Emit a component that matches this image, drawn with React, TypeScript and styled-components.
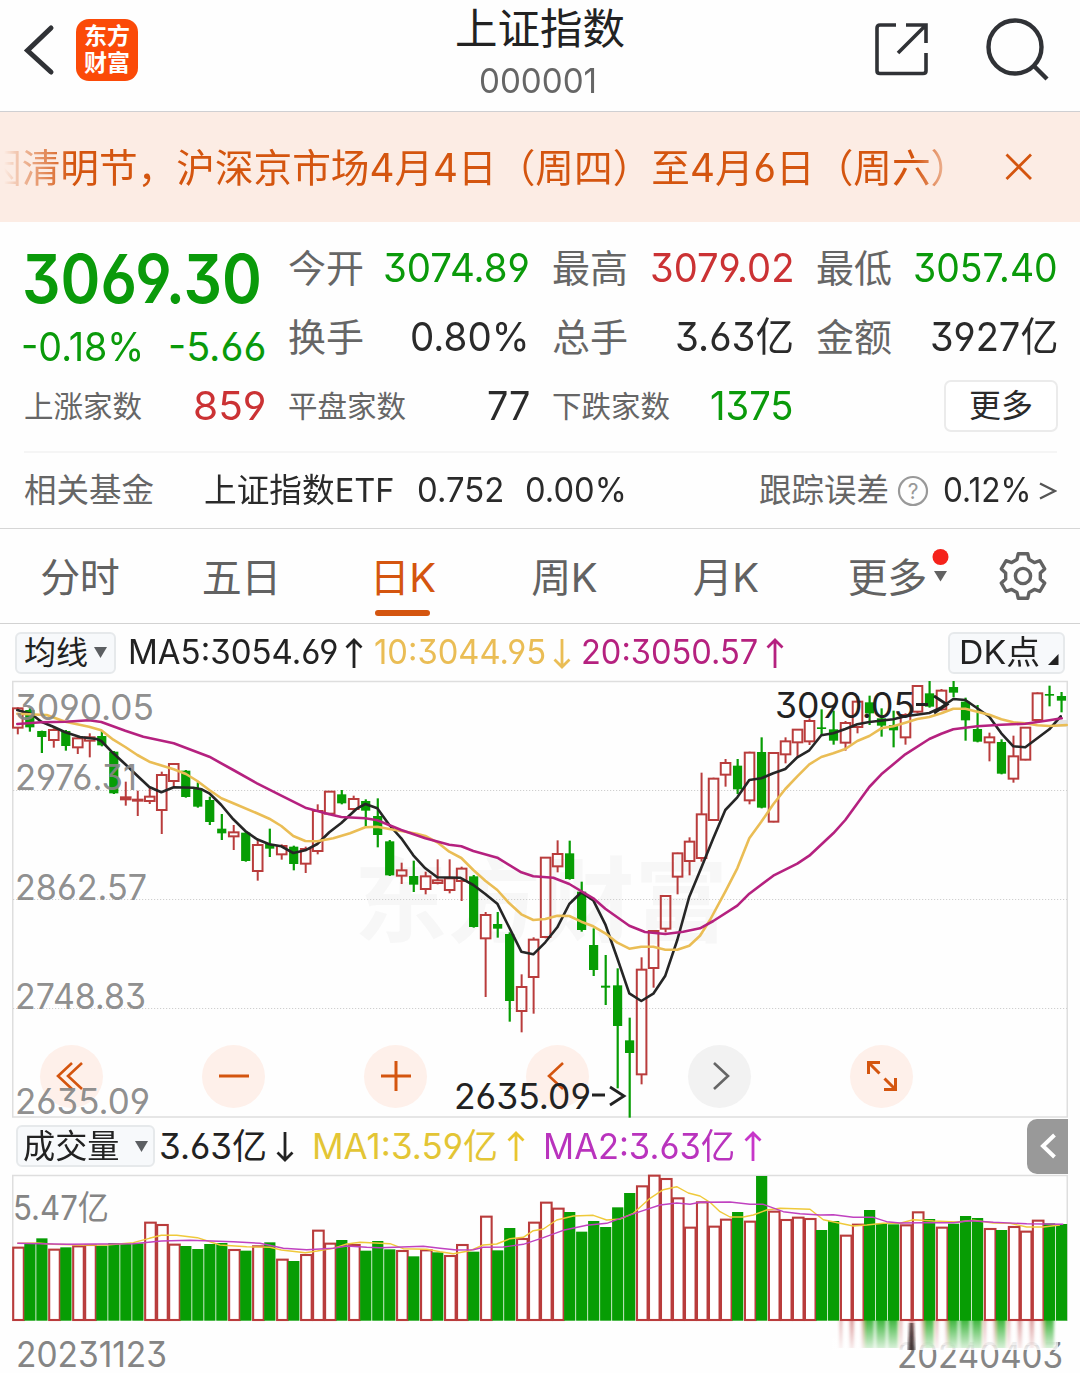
import React, { useLayoutEffect, useRef, useState } from "react";
import styled, { createGlobalStyle } from "styled-components";

const GREEN = "#0a9a0a";
const BAR_GREEN = "#079d04";
const RED = "#cb3234";
const BAR_RED = "#b93c3c";
const ORANGE = "#d4550f";
const FONT = `Inter, "Noto Sans CJK SC", sans-serif`;
const FEATURES = `"cv03" 1, "cv04" 1, "cv09" 1`;

const Global = createGlobalStyle`
  html, body { margin: 0; padding: 0; background: #fefefe; }
  body {
    font-family: ${FONT};
    font-feature-settings: ${FEATURES};
    color: #2a2a2a;
  }
  * { box-sizing: border-box; }
  button { font: inherit; font-feature-settings: inherit; color: inherit; padding: 0; margin: 0; }
`;

/* ---------- text that condenses to a given width ---------- */

const FitBox = styled.span<{ $w: number; $size: number; $weight?: number; $color?: string; $ml?: number }>`
  display: block;
  flex: none;
  width: ${(p) => p.$w}px;
  margin-left: ${(p) => p.$ml ?? 0}px;
  font-size: ${(p) => p.$size}px;
  font-weight: ${(p) => p.$weight ?? 400};
  line-height: 1.2;
  color: ${(p) => p.$color ?? "inherit"};
  white-space: nowrap;
`;

const FitInner = styled.span`
  display: inline-block;
  transform-origin: 0 50%;
`;

type FitProps = { text: string; w: number; size: number; weight?: number; color?: string; ml?: number };

function Fit({ text, w, size, weight, color, ml }: FitProps) {
  const ref = useRef<HTMLSpanElement>(null);
  const [k, setK] = useState(1);
  useLayoutEffect(() => {
    if (ref.current) setK(w / ref.current.offsetWidth);
  }, [text, w, size]);
  return (
    <FitBox $w={w} $size={size} $weight={weight} $color={color} $ml={ml}>
      <FitInner ref={ref} style={{ transform: `scaleX(${k})` }}>
        {text}
      </FitInner>
    </FitBox>
  );
}

/* ---------- page ---------- */

const Page = styled.main`
  width: 1080px;
  height: 1373px;
  overflow: hidden;
  background: #fefefe;
`;

const Header = styled.header`
  display: grid;
  grid-template-columns: 1fr auto 1fr;
  height: 112px;
  border-bottom: 1px solid #cfcfd2;
`;

const HeaderLeft = styled.div`
  display: flex;
  align-items: center;
  height: 100px;
  padding-left: 22px;
  gap: 20px;
`;

const HeaderRight = styled.div`
  display: flex;
  align-items: center;
  justify-content: flex-end;
  height: 98px;
  padding-right: 30px;
  gap: 58px;
`;

const Titles = styled.div`
  display: flex;
  flex-direction: column;
  align-items: center;
`;

const TitleLine = styled.div<{ $h: number }>`
  display: flex;
  align-items: center;
  height: ${(p) => p.$h}px;
`;

const Logo = styled.div`
  display: flex;
  flex-direction: column;
  align-items: center;
  justify-content: center;
  width: 62px;
  height: 62px;
  border-radius: 13px;
  background: #fb4a08;
  color: #fff;
  font-size: 23px;
  font-weight: 700;
  line-height: 27px;
`;

const Banner = styled.section`
  display: flex;
  align-items: center;
  height: 110px;
  background: #fcece4;
`;

const Marquee = styled.div`
  display: flex;
  width: 975px;
  padding-top: 2px;
  overflow: hidden;
  mask-image: linear-gradient(to right, transparent 4px, rgba(0, 0, 0, 0.3) 20px, #000 72px, #000 915px, transparent 962px);
`;

const CloseIcon = styled.svg`
  margin-left: 29px;
`;

const Quote = styled.section`
  display: grid;
  grid-template-columns: repeat(4, 240px);
  column-gap: 24px;
  padding: 12px 24px 10px;
`;

const QuoteColumn = styled.div`
  display: flex;
  flex-direction: column;
`;

const Cell = styled.div<{ $h?: number }>`
  display: flex;
  align-items: center;
  justify-content: space-between;
  height: ${(p) => p.$h ?? 69}px;
  margin-right: -2px;
`;

const Label = styled.span<{ $size: number }>`
  font-size: ${(p) => p.$size}px;
  line-height: 1.2;
  color: #666;
  white-space: nowrap;
`;

const MoreButton = styled.button`
  width: 114px;
  height: 52px;
  margin: -2px 0 0 auto;
  border: 2px solid #ebebeb;
  border-radius: 7px;
  background: #fff;
  font-size: 32px;
  line-height: 48px;
`;

const FundRow = styled.section`
  display: flex;
  align-items: center;
  height: 77px;
  margin: 0 23px 0 24px;
  border-top: 2px solid #f5f5f5;
`;

const Spacer = styled.span`
  flex: 1;
`;

const HelpIcon = styled.svg`
  margin: 0 14px 0 8px;
`;

const Tabs = styled.nav`
  display: flex;
  height: 96px;
  border-top: 1px solid #d6d6d6;
  border-bottom: 1px solid #d2d2d2;
`;

const Tab = styled.div<{ $active?: boolean }>`
  position: relative;
  display: flex;
  justify-content: center;
  align-items: center;
  width: 161.5px;
  height: 94px;
  padding: 3px 2px 0 0;
  font-size: 40px;
  line-height: 1.2;
  letter-spacing: -0.5px;
  color: ${(p) => (p.$active ? ORANGE : "#626262")};
  &::after {
    content: "";
    display: ${(p) => (p.$active ? "block" : "none")};
    position: absolute;
    left: 52px;
    bottom: 7px;
    width: 55px;
    height: 6px;
    border-radius: 3px;
    background: ${ORANGE};
  }
`;

const MoreMark = styled.svg`
  position: absolute;
  left: 123.5px;
  top: 17px;
`;

const GearBox = styled.div`
  display: flex;
  align-items: center;
  justify-content: center;
  width: 108px;
`;

const LegendRow = styled.div<{ $h: number; $left: number; $right: number }>`
  display: flex;
  align-items: center;
  height: ${(p) => p.$h}px;
  padding: 0 ${(p) => p.$right}px 0 ${(p) => p.$left}px;
`;

const Chip = styled.button<{ $w: number; $pad: number }>`
  display: flex;
  align-items: center;
  justify-content: space-between;
  flex: none;
  width: ${(p) => p.$w}px;
  height: 42px;
  padding: 0 ${(p) => p.$pad}px;
  border: 2px solid #e6e9eb;
  border-radius: 6px;
  background: #f7f9fb;
  color: #222;
  font-size: 32px;
  line-height: 38px;
  white-space: nowrap;
`;

const ArrowSvg = styled.svg<{ $ml: number }>`
  flex: none;
  margin-left: ${(p) => p.$ml}px;
`;

const SideToggle = styled.button`
  display: flex;
  align-items: center;
  justify-content: center;
  width: 41px;
  height: 55px;
  border: 0;
  border-radius: 10px 0 0 10px;
  background: #999;
`;

const ChartArea = styled.section`
  position: relative;
  height: 436px;
`;

const ChartSvg = styled.svg`
  display: block;
  overflow: visible;
`;

const Controls = styled.div`
  position: absolute;
  left: 40px;
  top: 363.5px;
  display: flex;
  gap: 99px;
`;

const RoundButton = styled.button<{ $muted?: boolean }>`
  display: flex;
  align-items: center;
  justify-content: center;
  width: 63px;
  height: 63px;
  border: 0;
  border-radius: 50%;
  background: ${(p) => (p.$muted ? "#f2f2f2" : "#fef0ea")};
  color: ${(p) => (p.$muted ? "#666" : ORANGE)};
`;

const Overlay = styled.svg`
  position: absolute;
  left: 0;
  top: 0;
  pointer-events: none;
`;

/* ---------- icons ---------- */

function Caret() {
  return (
    <svg width="13" height="11" viewBox="0 0 13 11">
      <path d="M0 0H13L6.5 11Z" fill="#5c5f62" />
    </svg>
  );
}

function TrendArrow({ up, color, ml }: { up?: boolean; color: string; ml: number }) {
  return (
    <ArrowSvg $ml={ml} width="18" height="32" viewBox="0 0 18 32" fill="none" stroke={color} strokeWidth="2.8">
      {up ? <path d="M9 31V3M1.5 10.5L9 3L16.5 10.5" /> : <path d="M9 2V30M1.5 22.5L9 30L16.5 22.5" />}
    </ArrowSvg>
  );
}

function Gear() {
  const pts: string[] = [];
  for (let k = 0; k < 6; k++) {
    const shape: [number, number][] = [
      [-20, 17.6],
      [-12, 22.8],
      [12, 22.8],
      [20, 17.6],
    ];
    shape.forEach(([a, r]) => {
      const t = ((k * 60 + a - 90) * Math.PI) / 180;
      pts.push(`${(25 + r * Math.cos(t)).toFixed(2)},${(25 + r * Math.sin(t)).toFixed(2)}`);
    });
  }
  return (
    <svg width="50" height="50" viewBox="0 0 50 50" fill="none" stroke="#626262" strokeWidth="3.4" strokeLinejoin="round">
      <polygon points={pts.join(" ")} />
      <circle cx="25" cy="25" r="7.6" />
    </svg>
  );
}

/* ---------- chart data, in thirds of a pixel ---------- */

type Candle = [0 | 1, number, number, number, number];

// direction (1 = up), high, body top, body bottom, low
const candles: Candle[] = [
  [1, 97, 100, 158, 178], [0, 100, 105, 157, 170], [0, 167, 168, 186, 234], [1, 160, 165, 195, 218],
  [0, 165, 168, 213, 227], [1, 185, 190, 217, 237], [1, 175, 187, 197, 247], [0, 165, 183, 211, 214],
  [0, 228, 230, 355, 357], [1, 320, 367, 373, 392], [1, 347, 374, 376, 423], [1, 337, 365, 378, 387],
  [1, 290, 300, 405, 477], [1, 265, 267, 318, 333], [0, 285, 287, 366, 368], [0, 322, 340, 395, 398],
  [0, 365, 375, 441, 450], [0, 417, 461, 475, 495], [1, 450, 472, 484, 525], [0, 470, 473, 558, 560],
  [1, 495, 510, 588, 617], [0, 461, 507, 521, 546], [1, 508, 513, 538, 554], [0, 512, 515, 567, 586],
  [1, 515, 522, 566, 594], [1, 388, 408, 528, 538], [1, 348, 350, 416, 420], [0, 345, 358, 385, 388],
  [1, 362, 372, 402, 408], [0, 373, 378, 407, 455], [0, 370, 423, 480, 517], [0, 495, 499, 601, 603],
  [1, 563, 586, 602, 627], [0, 557, 603, 629, 651], [1, 590, 604, 642, 658], [1, 553, 616, 624, 628],
  [1, 553, 610, 645, 655], [1, 575, 581, 618, 678], [0, 600, 604, 756, 758], [1, 711, 720, 790, 966],
  [0, 711, 747, 761, 788], [0, 772, 777, 978, 1040], [1, 898, 936, 1008, 1072], [1, 787, 794, 906, 1016],
  [1, 546, 548, 786, 790], [1, 496, 537, 574, 592], [0, 497, 535, 612, 614], [0, 620, 650, 765, 770],
  [0, 760, 810, 885, 903], [0, 840, 932, 938, 990], [0, 880, 931, 1053, 1240], [0, 1028, 1096, 1134, 1328],
  [1, 847, 884, 1198, 1228], [1, 768, 768, 879, 938], [1, 662, 663, 761, 772], [1, 533, 535, 605, 658],
  [1, 487, 500, 558, 601], [1, 293, 418, 549, 560], [1, 308, 311, 435, 437], [1, 252, 264, 299, 335],
  [0, 252, 272, 343, 357], [1, 230, 233, 376, 388], [0, 187, 231, 398, 400], [1, 232, 234, 440, 442],
  [1, 187, 199, 238, 265], [1, 162, 164, 202, 247], [1, 130, 138, 199, 210], [0, 103, 157, 162, 180],
  [0, 107, 163, 197, 209], [1, 138, 144, 203, 227], [1, 64, 80, 156, 175], [0, 62, 82, 115, 150],
  [0, 100, 130, 152, 185], [0, 107, 150, 166, 217], [1, 115, 120, 187, 209], [1, 30, 33, 110, 115],
  [0, 18, 55, 95, 98], [1, 42, 47, 103, 107], [0, 18, 36, 53, 67], [0, 68, 80, 136, 197],
  [0, 90, 162, 200, 202], [1, 173, 187, 202, 259], [0, 193, 201, 296, 298], [1, 182, 244, 311, 323],
  [1, 157, 158, 254, 256], [1, 52, 55, 135, 140], [0, 32, 57, 62, 94], [0, 51, 63, 77, 112],
];

const ma5 = "52,105 95,118 124,140 160,155 196,172 240,186 290,192 304,198 340,235 376,268 412,302 448,336 484,352 521,337 580,338 605,343 628,355 664,390 700,433 736,468 771,493 808,508 844,514 880,534 916,526 952,507 988,472 1024,444 1070,401 1096,387 1132,400 1168,450 1204,490 1240,541 1276,580 1312,607 1380,608 1420,630 1456,657 1492,686 1528,758 1564,830 1600,838 1636,802 1672,757 1708,687 1744,652 1780,676 1816,748 1852,850 1888,955 1924,978 1960,956 1996,902 2032,795 2068,665 2104,578 2140,490 2176,405 2212,367 2248,315 2284,310 2320,295 2356,282 2392,247 2428,226 2464,181 2500,175 2536,162 2572,148 2608,141 2680,133 2716,124 2788,114 2824,97 2860,72 2896,75 2932,100 2968,125 3004,175 3040,214 3076,217 3112,190 3148,163 3182,124";
const ma10 = "52,116 140,120 196,140 267,155 304,166 340,194 376,216 412,240 448,260 521,283 558,297 592,318 628,345 664,370 700,385 771,415 808,431 844,453 880,483 916,498 952,499 1000,490 1050,475 1096,457 1132,455 1168,462 1204,468 1250,476 1276,483 1312,502 1348,530 1384,549 1420,585 1456,617 1492,645 1528,685 1564,718 1600,735 1636,732 1672,722 1708,723 1744,740 1780,754 1816,775 1852,803 1888,821 1924,815 1960,815 1996,824 2032,824 2068,812 2100,782 2130,735 2176,650 2212,580 2248,490 2284,440 2320,388 2356,342 2392,304 2428,268 2464,246 2500,235 2536,222 2572,198 2608,183 2644,160 2680,154 2716,143 2752,132 2788,126 2824,115 2860,101 2896,101 2932,110 2968,119 3004,133 3040,142 3076,145 3112,151 3148,153 3200,150";
const ma20 = "52,147 124,142 196,140 267,136 304,141 376,167 430,185 521,205 628,245 700,285 771,325 844,362 916,398 988,418 1024,426 1096,430 1132,436 1204,465 1276,490 1348,509 1384,514 1420,528 1492,548 1564,592 1600,604 1660,608 1708,627 1780,670 1816,701 1888,752 1935,771 1996,777 2050,770 2100,760 2140,738 2212,692 2248,656 2320,602 2392,566 2428,542 2500,475 2536,435 2608,336 2644,298 2716,238 2788,192 2824,176 2860,163 2932,154 3004,149 3076,146 3148,136 3185,130";

const volumes = [
  398, 387, 370, 404, 397, 394, 390, 392, 384, 387, 385, 323, 330, 389, 393, 402, 387, 384, 405, 407, 394, 382, 434, 438,
  420, 347, 386, 375, 390, 407, 378, 403, 408, 424, 406, 412, 423, 390, 410, 305, 406, 339, 372, 323, 263, 281, 291, 350,
  318, 336, 277, 234, 214, 182, 192, 250, 338, 262, 335, 314, 291, 320, 183, 290, 315, 308, 312, 345, 318, 362, 329, 285,
  326, 328, 331, 292, 312, 338, 326, 303, 309, 342, 345, 336, 350, 317, 325, 327,
];
const volumeUp = "1001011000011100001010101110100010101101001111000000111111110101111001100011010001011100"
  .split("")
  .map((c) => c === "1");

const vma1 = "52,385 110,384 160,388 250,390 320,390 400,383 448,370 484,361 530,361 592,368 660,390 740,395 810,397 844,405 916,413 952,408 1000,400 1040,387 1080,382 1170,386 1210,401 1280,403 1320,410 1360,416 1410,407 1450,390 1490,387 1530,371 1570,367 1600,347 1630,342 1670,315 1720,303 1780,301 1820,315 1860,312 1900,295 1950,250 1990,224 2030,215 2065,234 2100,243 2130,262 2160,290 2190,306 2230,306 2260,300 2300,285 2340,280 2430,283 2470,314 2520,325 2560,333 2600,330 2650,325 2700,325 2740,314 2800,318 2870,321 2920,316 2980,324 3030,325 3080,336 3130,336 3180,330";
const vma2 = "52,385 200,388 400,386 484,378 570,376 700,380 780,385 850,400 920,404 1000,400 1040,393 1100,397 1140,398 1270,394 1320,400 1370,405 1420,404 1450,397 1510,396 1570,388 1630,368 1690,346 1760,331 1820,325 1870,307 1920,290 1980,270 2030,264 2070,268 2100,262 2190,261 2250,268 2290,268 2350,290 2400,296 2460,300 2500,299 2560,307 2620,307 2660,320 2700,324 2770,323 2860,323 2910,317 2980,322 3080,326 3190,328";

const toPoints = (s: string, dy: number) =>
  s
    .split(" ")
    .map((p) => {
      const [x, y] = p.split(",").map(Number);
      return `${(x / 3).toFixed(1)},${(y / 3 + dy).toFixed(1)}`;
    })
    .join(" ");

type AxisTextProps = { x: number; y: number; w: number; size: number; fill: string; children: string };

function AxisText({ x, y, w, size, fill, children }: AxisTextProps) {
  return (
    <text x={x} y={y + size * 0.364} fontSize={size} fill={fill} textLength={w} lengthAdjust="spacingAndGlyphs">
      {children}
    </text>
  );
}

function PriceChart() {
  return (
    <ChartSvg width="1080" height="436" viewBox="0 681 1080 436">
      <text x="354" y="935" fontSize="93.5" fontWeight="700" fill="#f7f7f7">
        东方财富
      </text>
      <rect x="12.75" y="681.5" width="1054.5" height="435.5" fill="none" stroke="#dedede" strokeWidth="1.5" />
      {[790.5, 899.5, 1008.5].map((y) => (
        <line key={y} x1="13" x2="1067" y1={y} y2={y} stroke="#cfcfcf" strokeDasharray="1.2 1.8" />
      ))}
    </ChartSvg>
  );
}

function PriceSeries() {
  return (
    <Overlay width="1080" height="440" viewBox="0 681 1080 440">
      {candles.map(([up, hi, top, bottom, lo], i) => {
        const x = 17.8 + i * 11.996;
        const y = (v: number) => 675 + v / 3;
        return up ? (
          <g key={i} stroke={BAR_RED} strokeWidth="2" fill="none">
            <line x1={x} x2={x} y1={y(hi)} y2={y(top)} />
            <rect x={x - 4.8} y={y(top)} width="9.6" height={Math.max(1, y(bottom) - y(top))} />
            <line x1={x} x2={x} y1={y(bottom)} y2={y(lo)} />
          </g>
        ) : (
          <g key={i} fill={BAR_GREEN}>
            <rect x={x - 1} y={y(hi)} width="2.2" height={y(lo) - y(hi)} />
            <rect x={x - 4.6} y={y(top)} width="9.2" height={y(bottom) - y(top)} />
          </g>
        );
      })}
      <rect x="1055" y="720" width="12" height="7" fill="#ddd" opacity="0.8" />
      <g fill="none" strokeWidth="2.6" strokeLinejoin="round" strokeLinecap="round">
        <polyline points={toPoints(ma5, 675)} stroke="#262626" />
        <polyline points={toPoints(ma10, 675)} stroke="#eabd55" />
        <polyline points={toPoints(ma20, 675)} stroke="#b5217f" />
      </g>
      <g fillOpacity="0.93">
        <AxisText x={15} y={707.3} w={139} size={35} fill="#858585">3090.05</AxisText>
        <AxisText x={15} y={777.3} w={122} size={35} fill="#858585">2976.31</AxisText>
        <AxisText x={15} y={887.3} w={132} size={35} fill="#858585">2862.57</AxisText>
        <AxisText x={15} y={996.3} w={131} size={35} fill="#858585">2748.83</AxisText>
        <AxisText x={15} y={1101} w={135} size={35} fill="#858585">2635.09</AxisText>
      </g>
      <AxisText x={775} y={705} w={140} size={35} fill="#222">3090.05</AxisText>
      <path d="M916 704.5H928M934 696L947 704.5L934 713" fill="none" stroke="#222" strokeWidth="2.8" />
      <AxisText x={454} y={1096.5} w={137} size={35} fill="#222">2635.09</AxisText>
      <path d="M592 1095H605M610 1087L624 1096L610 1105" fill="none" stroke="#222" strokeWidth="2.8" />
    </Overlay>
  );
}

function VolumeChart() {
  const base = 1320.7;
  return (
    <ChartSvg width="1080" height="198" viewBox="0 1175 1080 198">
      <defs>
        <linearGradient id="fade" x1="0" y1="0" x2="0" y2="1">
          <stop offset="0" stopColor="#fff" stopOpacity="0" />
          <stop offset="1" stopColor="#fff" stopOpacity="0.85" />
        </linearGradient>
        <filter id="soft" x="-5%" y="-5%" width="110%" height="110%">
          <feGaussianBlur stdDeviation="1.6 0.4" />
        </filter>
      </defs>
      <path d="M12.75 1321V1175.5H1067.25V1321" fill="none" stroke="#dedede" strokeWidth="1.5" />
      <AxisText x={13} y={1208} w={96} size={34} fill="#858585">5.47亿</AxisText>
      {volumes.map((v, i) => {
        const x = 12.2 + i * 11.996;
        const y = 1115 + v / 3;
        return volumeUp[i] ? (
          <rect key={i} x={x + 1} y={y} width="10.6" height={base - y - 0.7} fill="#fff" stroke={BAR_RED} strokeWidth="2.1" />
        ) : (
          <rect key={i} x={x + 0.1} y={y} width="11.2" height={base - y} fill={BAR_GREEN} />
        );
      })}
      <g fill="none" strokeWidth="1.4" strokeLinejoin="round">
        <polyline points={toPoints(vma1, 1115)} stroke="#efc93a" />
        <polyline points={toPoints(vma2, 1115)} stroke="#c042c0" />
      </g>
      <AxisText x={16} y={1354} w={151} size={35} fill="#858585">20231123</AxisText>
      <AxisText x={897} y={1355} w={166} size={35} fill="#858585">20240403</AxisText>
      <rect x="836" y="1322" width="230" height="19" fill="#fefefe" />
      <rect x="836" y="1341" width="220" height="4" fill="#fefefe" opacity="0.6" />
      <g filter="url(#soft)">
        {volumes.map((_, i) => {
          const x = 12.2 + i * 11.996;
          if (i < 69 || i > 86) return null;
          return volumeUp[i] ? (
            <g key={i} fill={BAR_RED} opacity="0.6">
              <rect x={x} y="1320" width="1.8" height="28" />
              <rect x={x + 10} y="1320" width="1.8" height="28" />
            </g>
          ) : (
            <rect key={i} x={x} y="1320" width="10" height="28" fill={BAR_GREEN} opacity="0.75" />
          );
        })}
      </g>
      <rect x="832" y="1320" width="226" height="30" fill="url(#fade)" />
      <g filter="url(#soft)">
        <path d="M910 1323L908 1350H915L913 1323Z" fill="#241416" opacity="0.85" />
      </g>
    </ChartSvg>
  );
}

/* ---------- app ---------- */

export default function App() {
  return (
    <Page>
      <Global />
      <Header>
        <HeaderLeft>
          <svg width="34" height="54" viewBox="0 0 34 54" fill="none" stroke="#303236" strokeWidth="5" strokeLinecap="round">
            <path d="M29 5L5.5 27.5L29 49" strokeLinejoin="miter" />
          </svg>
          <Logo>
            <span>东方</span>
            <span>财富</span>
          </Logo>
        </HeaderLeft>
        <Titles>
          <TitleLine $h={56}>
            <Fit text="上证指数" w={170} size={42.5} color="#222" />
          </TitleLine>
          <TitleLine $h={50}>
            <Fit text="000001" w={118} size={34} color="#666" ml={-4} />
          </TitleLine>
        </Titles>
        <HeaderRight>
          <svg width="54" height="54" viewBox="0 0 54 54" fill="none" stroke="#303236" strokeWidth="3.6">
            <path d="M22 3H6Q3 3 3 6V49Q3 51.5 6 51.5H49Q52 51.5 52 49V31" />
            <path d="M32 3H52V21M52 3L24 31" />
          </svg>
          <svg width="64" height="64" viewBox="0 0 64 64" fill="none" stroke="#303236" strokeWidth="4.4">
            <circle cx="29" cy="30" r="26.5" />
            <path d="M48 49L61 62" />
          </svg>
        </HeaderRight>
      </Header>

      <Banner>
        <Marquee>
          <Fit text="因清明节，沪深京市场4月4日（周四）至4月6日（周六）" w={986} size={39} color={ORANGE} ml={-17} />
        </Marquee>
        <CloseIcon width="30" height="30" viewBox="0 0 30 30" fill="none" stroke={ORANGE} strokeWidth="2.8">
          <path d="M2.5 2.5L27 27M27 2.5L2.5 27" />
        </CloseIcon>
      </Banner>

      <Quote>
        <QuoteColumn>
          <Cell $h={90}>
            <Fit text="3069.30" w={240} size={67} weight={600} color={GREEN} ml={-2} />
          </Cell>
          <Cell $h={48}>
            <Fit text="-0.18%" w={123} size={39.5} color={GREEN} ml={-3} />
            <Fit text="-5.66" w={98} size={39.5} color={GREEN} />
          </Cell>
          <Cell>
            <Label $size={29.5}>上涨家数</Label>
            <Fit text="859" w={73} size={39.5} color={RED} />
          </Cell>
        </QuoteColumn>
        <QuoteColumn>
          <Cell>
            <Label $size={38}>今开</Label>
            <Fit text="3074.89" w={147} size={39.5} color={GREEN} />
          </Cell>
          <Cell>
            <Label $size={38}>换手</Label>
            <Fit text="0.80%" w={120} size={39.5} />
          </Cell>
          <Cell>
            <Label $size={29.5}>平盘家数</Label>
            <Fit text="77" w={43} size={39.5} />
          </Cell>
        </QuoteColumn>
        <QuoteColumn>
          <Cell>
            <Label $size={38}>最高</Label>
            <Fit text="3079.02" w={144} size={39.5} color={RED} />
          </Cell>
          <Cell>
            <Label $size={38}>总手</Label>
            <Fit text="3.63亿" w={119} size={39.5} />
          </Cell>
          <Cell>
            <Label $size={29.5}>下跌家数</Label>
            <Fit text="1375" w={84} size={39.5} color={GREEN} />
          </Cell>
        </QuoteColumn>
        <QuoteColumn>
          <Cell>
            <Label $size={38}>最低</Label>
            <Fit text="3057.40" w={145} size={39.5} color={GREEN} />
          </Cell>
          <Cell>
            <Label $size={38}>金额</Label>
            <Fit text="3927亿" w={128} size={39.5} />
          </Cell>
          <Cell>
            <MoreButton>更多</MoreButton>
          </Cell>
        </QuoteColumn>
      </Quote>

      <FundRow>
        <Label $size={32.5}>相关基金</Label>
        <Fit text="上证指数ETF" w={191} size={33} ml={50} />
        <Fit text="0.752" w={87} size={34} ml={22} />
        <Fit text="0.00%" w={102} size={34} ml={21} />
        <Spacer />
        <Label $size={32.5}>跟踪误差</Label>
        <HelpIcon width="32" height="32" viewBox="0 0 32 32">
          <circle cx="16" cy="16" r="14" fill="none" stroke="#999" strokeWidth="2.2" />
          <text x="16" y="23.5" fontSize="21" fill="#999" textAnchor="middle">
            ?
          </text>
        </HelpIcon>
        <Fit text="0.12%" w={88} size={34} />
        <svg width="26" height="20" viewBox="0 0 26 20" fill="none" stroke="#555" strokeWidth="2.4">
          <path d="M9 2.5L24 10L9 17.5" />
        </svg>
      </FundRow>

      <Tabs>
        <Tab>分时</Tab>
        <Tab>五日</Tab>
        <Tab $active>日K</Tab>
        <Tab>周K</Tab>
        <Tab>月K</Tab>
        <Tab>
          更多
          <MoreMark width="24" height="40" viewBox="0 0 24 40">
            <circle cx="9.5" cy="11" r="8" fill="#f5221b" />
            <path d="M3 25H16L9.5 35.5Z" fill="#626262" />
          </MoreMark>
        </Tab>
        <GearBox>
          <Gear />
        </GearBox>
      </Tabs>

      <LegendRow $h={57} $left={15} $right={15}>
        <Chip $w={101} $pad={7}>
          均线
          <Caret />
        </Chip>
        <Fit text="MA5:3054.69" w={210} size={33.5} color="#222" ml={12} />
        <TrendArrow up color="#222" ml={7} />
        <Fit text="10:3044.95" w={172} size={33.5} color="#eabd55" ml={11} />
        <TrendArrow color="#eabd55" ml={7} />
        <Fit text="20:3050.57" w={177} size={33.5} color="#b5217f" ml={10} />
        <TrendArrow up color="#b5217f" ml={8} />
        <Spacer />
        <Chip $w={117} $pad={4}>
          <Fit text="DK点" w={81} size={33} ml={4} />
          <svg width="11" height="26" viewBox="0 0 11 26">
            <path d="M10.5 14V25H0Z" fill="#222" />
          </svg>
        </Chip>
      </LegendRow>

      <ChartArea>
        <PriceChart />
        <Controls>
          <RoundButton>
            <svg width="32" height="32" viewBox="0 0 32 32" fill="none" stroke="currentColor" strokeWidth="2.6">
              <path d="M16 3L2 16L16 29M26 3L12 16L26 29" />
            </svg>
          </RoundButton>
          <RoundButton>
            <svg width="32" height="32" viewBox="0 0 32 32" fill="none" stroke="currentColor" strokeWidth="3">
              <path d="M1 16H31" />
            </svg>
          </RoundButton>
          <RoundButton>
            <svg width="32" height="32" viewBox="0 0 32 32" fill="none" stroke="currentColor" strokeWidth="3">
              <path d="M1 16H31M16 1V31" />
            </svg>
          </RoundButton>
          <RoundButton>
            <svg width="32" height="32" viewBox="0 0 32 32" fill="none" stroke="currentColor" strokeWidth="2.6">
              <path d="M21 3L7 16L21 29" />
            </svg>
          </RoundButton>
          <RoundButton $muted>
            <svg width="32" height="32" viewBox="0 0 32 32" fill="none" stroke="currentColor" strokeWidth="2.6">
              <path d="M10 3L24 16L10 29" />
            </svg>
          </RoundButton>
          <RoundButton>
            <svg width="32" height="32" viewBox="0 0 32 32" fill="none" stroke="currentColor" strokeWidth="3">
              <path d="M14 2.5H2.5V14M2.5 2.5L13.5 13.5M18 29.5H29.5V18M29.5 29.5L18.5 18.5" />
            </svg>
          </RoundButton>
        </Controls>
        <PriceSeries />
      </ChartArea>

      <LegendRow $h={58} $left={16} $right={12}>
        <Chip $w={139} $pad={5}>
          <Fit text="成交量" w={97} size={32.5} />
          <Caret />
        </Chip>
        <Fit text="3.63亿" w={108} size={35} color="#222" ml={4} />
        <TrendArrow color="#222" ml={9} />
        <Fit text="MA1:3.59亿" w={186} size={35} color="#e3c535" ml={18} />
        <TrendArrow up color="#e9c52e" ml={9} />
        <Fit text="MA2:3.63亿" w={192} size={35} color="#b933bd" ml={18} />
        <TrendArrow up color="#c736c9" ml={9} />
        <Spacer />
        <SideToggle>
          <svg width="18" height="28" viewBox="0 0 18 28" fill="none" stroke="#fff" strokeWidth="4">
            <path d="M15.5 3L4 14L15.5 25" />
          </svg>
        </SideToggle>
      </LegendRow>

      <VolumeChart />
    </Page>
  );
}
